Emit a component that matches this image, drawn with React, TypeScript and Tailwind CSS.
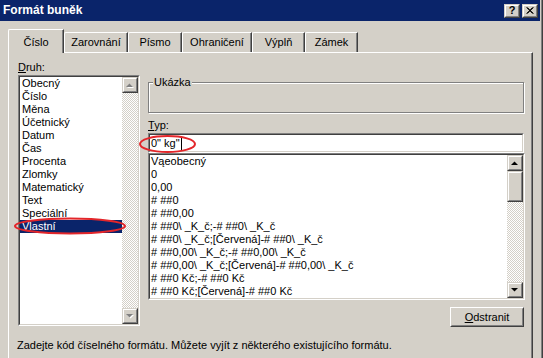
import React from 'react';

// ---- Data ----
const tabs = [
  { label: 'Číslo', w: 'w-[56px]', active: true },
  { label: 'Zarovnání', w: 'w-[64px]' },
  { label: 'Písmo', w: 'w-[54px]' },
  { label: 'Ohraničení', w: 'w-[70px]' },
  { label: 'Výplň', w: 'w-[53px]' },
  { label: 'Zámek', w: 'w-[53px]' },
];

const categories = [
  'Obecný', 'Číslo', 'Měna', 'Účetnický', 'Datum', 'Čas', 'Procenta',
  'Zlomky', 'Matematický', 'Text', 'Speciální', 'Vlastní',
];

const formats = [
  'Vąeobecný',
  '0',
  '0,00',
  '# ##0',
  '# ##0,00',
  '# ##0\\ _K_č;-# ##0\\ _K_č',
  '# ##0\\ _K_č;[Červená]-# ##0\\ _K_č',
  '# ##0,00\\ _K_č;-# ##0,00\\ _K_č',
  '# ##0,00\\ _K_č;[Červená]-# ##0,00\\ _K_č',
  '# ##0 Kč;-# ##0 Kč',
  '# ##0 Kč;[Červená]-# ##0 Kč',
];

// ---- 3D borders ----
function Raised({ className = '', children }: { className?: string; children?: React.ReactNode }) {
  return (
    <div className={`border border-t-[#d4d0c8] border-l-[#d4d0c8] border-r-[#404040] border-b-[#404040] bg-[#d4d0c8] ${className}`}>
      <div className="h-full w-full border border-t-white border-l-white border-r-[#808080] border-b-[#808080] flex items-center justify-center">
        {children}
      </div>
    </div>
  );
}

function Sunken({ className = '', children }: { className?: string; children?: React.ReactNode }) {
  return (
    <div className={`border border-t-[#808080] border-l-[#808080] border-r-white border-b-white ${className}`}>
      <div className="h-full w-full border border-t-[#404040] border-l-[#404040] border-r-[#d4d0c8] border-b-[#d4d0c8] bg-white flex">
        {children}
      </div>
    </div>
  );
}

// ---- Scrollbar parts ----
function Arrow({ up, disabled }: { up?: boolean; disabled?: boolean }) {
  const pts = up ? '0,4 7,4 3.5,0.5' : '0,0 7,0 3.5,3.5';
  return (
    <svg width="8" height="5" viewBox="0 0 8 5" className="block">
      {disabled && <polygon points={pts} fill="#ffffff" transform="translate(1,1)" />}
      <polygon points={pts} fill={disabled ? '#808080' : '#000000'} />
    </svg>
  );
}

function Track() {
  return <div className="flex-1 bg-[repeating-conic-gradient(#d4d0c8_0_25%,#ffffff_0_50%)] bg-[length:2px_2px]" />;
}

function ScrollBar({ disabled }: { disabled?: boolean }) {
  return (
    <div className="w-[16px] h-full flex flex-col">
      <Raised className="h-[16px] w-[16px]">
        <Arrow up disabled={disabled} />
      </Raised>
      {!disabled && <Raised className="h-[31px] w-[16px]" />}
      <Track />
      <Raised className="h-[16px] w-[16px]">
        <Arrow disabled={disabled} />
      </Raised>
    </div>
  );
}

// ---- Dialog ----
export default function App() {
  return (
    <div className="relative w-[543px] h-[358px] overflow-hidden bg-[#d4d0c8] text-[11px] leading-[13px] text-black font-['Liberation_Sans',Arial,sans-serif] shadow-[inset_-1px_0_0_#404040,inset_-2px_0_0_#808080]">
      {/* Title bar */}
      <div className="h-[21px] mr-[3px] bg-[#0a246a] flex items-center pl-[3px] pr-[2px]">
        <span className="flex-1 text-white font-bold text-[12px]">Formát buněk</span>
        <Raised className="w-[16px] h-[14px]">
          <span className="font-bold text-[11px] leading-[11px]">?</span>
        </Raised>
        <Raised className="w-[16px] h-[14px] ml-[2px]">
          <svg width="8" height="7" viewBox="0 0 8 7" className="block">
            <path d="M0.5 0.5 L7.5 6.5 M1.5 0.5 L6.5 6.5 M7.5 0.5 L0.5 6.5 M6.5 0.5 L1.5 6.5" stroke="#000" strokeWidth="1" />
          </svg>
        </Raised>
      </div>

      {/* Tabs */}
      <div className="pt-[8px] pl-[8px]">
        <div className="flex items-end h-[23px]">
          {tabs.map(t =>
            t.active ? (
              <div
                key={t.label}
                className={`${t.w} h-[24px] mb-[-1px] relative z-10 bg-[#d4d0c8] border-l border-t border-l-white border-t-white rounded-tl-[2px] border-r border-r-[#404040] shadow-[inset_-1px_0_0_#808080] flex justify-center pt-[6px]`}
              >
                {t.label}
              </div>
            ) : (
              <div
                key={t.label}
                className={`${t.w} h-[20px] border-l border-t border-l-white border-t-white rounded-tl-[2px] border-r border-r-[#404040] shadow-[inset_-1px_0_0_#808080] flex justify-center pt-[3px]`}
              >
                {t.label}
              </div>
            )
          )}
        </div>

        {/* Panel */}
        <div className="w-[525px] h-[320px] border-l border-t border-l-white border-t-white border-r border-r-[#404040] shadow-[inset_-1px_0_0_#808080] pt-[8px] pl-[9px]">
          <div className="flex gap-[8px]">
            {/* Category list */}
            <div className="w-[122px] flex flex-col">
              <div className="h-[14px]">
                <span className="underline">D</span>ruh:
              </div>
              <Sunken className="w-[122px] h-[251px]">
                <div className="flex-1 flex flex-col">
                  {categories.map(c => (
                    <div
                      key={c}
                      className={`h-[13px] pl-[2px] whitespace-nowrap ${c === 'Vlastní' ? 'bg-[#0a246a] text-white' : ''}`}
                    >
                      {c}
                    </div>
                  ))}
                </div>
                <ScrollBar disabled />
              </Sunken>
            </div>

            {/* Right side */}
            <div className="w-[377px] flex flex-col">
              <div className="relative mt-[21px] h-[31px] w-[376px] border border-[#808080] shadow-[inset_1px_1px_0_#ffffff,1px_1px_0_#ffffff]">
                <span className="absolute left-[4px] -top-[7px] bg-[#d4d0c8] px-[1px]">Ukázka</span>
              </div>
              <div className="mt-[6px] h-[13px]">
                <span className="underline">T</span>yp:
              </div>
              <Sunken className="mt-[1px] w-[376px] h-[20px]">
                <div className="flex items-center pl-[1px]">
                  <span>0" kg"</span>
                  <span className="w-[1px] h-[13px] bg-black ml-[1px]" />
                </div>
              </Sunken>
              <Sunken className="w-[377px] h-[147px]">
                <div className="flex-1 flex flex-col">
                  {formats.map(f => (
                    <div key={f} className="h-[13px] pl-[1px] whitespace-nowrap">
                      {f}
                    </div>
                  ))}
                </div>
                <ScrollBar />
              </Sunken>
              <div className="mt-[7px] flex justify-end pr-[1px]">
                <div className="w-[74px] h-[20px] border border-t-white border-l-white border-r-[#404040] border-b-[#404040]">
                  <div className="h-full border border-t-[#d4d0c8] border-l-[#d4d0c8] border-r-[#808080] border-b-[#808080] flex items-center justify-center">
                    <span>
                      <span className="underline">O</span>dstranit
                    </span>
                  </div>
                </div>
              </div>
            </div>
          </div>

          <div className="mt-[12px] ml-[-1px] whitespace-nowrap">
            Zadejte kód číselného formátu. Můžete vyjít z některého existujícího formátu.
          </div>
        </div>
      </div>

      {/* Red annotation ellipses */}
      <svg className="absolute inset-0 pointer-events-none" width="543" height="358" viewBox="0 0 543 358">
        <ellipse cx="70" cy="226" rx="55" ry="7.5" fill="none" stroke="#e3262a" strokeWidth="2" />
        <ellipse cx="167.5" cy="144" rx="27.5" ry="8" fill="none" stroke="#e3262a" strokeWidth="2" />
      </svg>
    </div>
  );
}
